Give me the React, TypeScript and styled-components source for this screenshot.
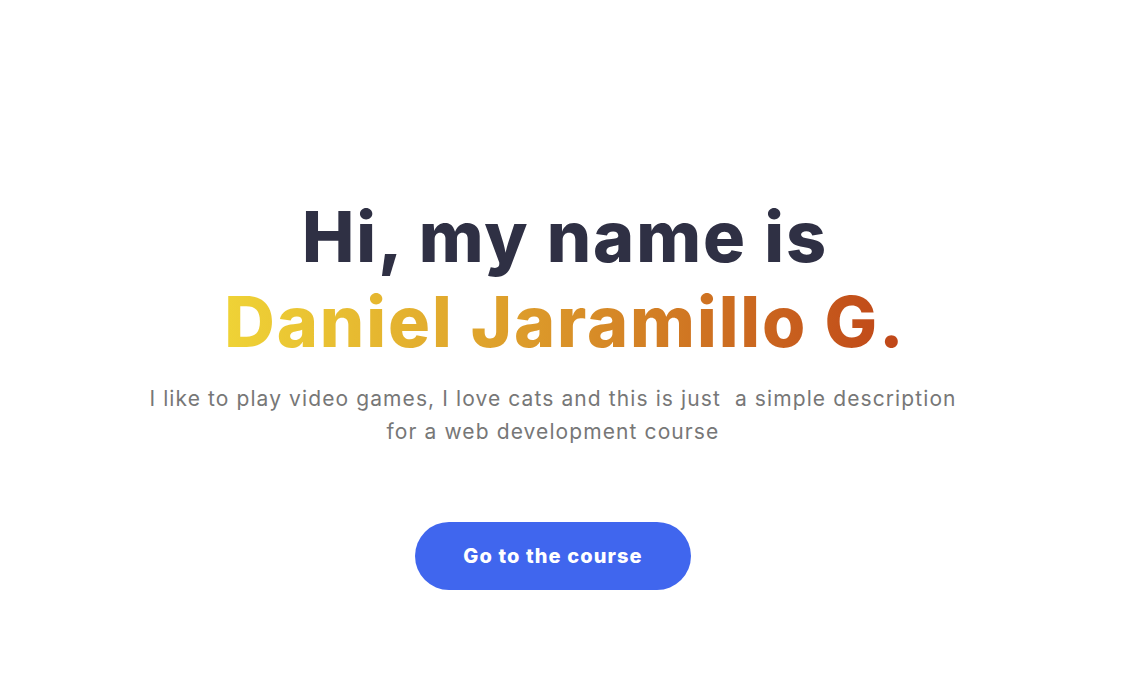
import React from "react";
import styled, { createGlobalStyle } from "styled-components";

const Global = createGlobalStyle`
  html, body { margin: 0; padding: 0; background: #ffffff; }
  body { font-family: "Inter", "Noto Sans", sans-serif; }
`;

const Page = styled.main`
  width: 1106px;
  height: 699px;
  display: flex;
  flex-direction: column;
  align-items: center;
  padding-top: 194px;
  box-sizing: border-box;
`;

const Title = styled.h1`
  margin: 0;
  padding-left: 24px;
  font-family: "Inter", sans-serif;
  font-weight: 800;
  font-size: 70px;
  line-height: 85px;
  letter-spacing: 1.9px;
  text-align: center;
  color: #2f3044;
`;

const Line = styled.span`
  display: block;
`;

const Name = styled.span`
  display: inline-block;
  background: linear-gradient(90deg, #efd336 0%, #dc9a2a 45%, #bf4518 100%);
  -webkit-background-clip: text;
  background-clip: text;
  color: transparent;
`;

const Description = styled.p`
  margin: 18px 0 0;
  max-width: 900px;
  font-family: "Inter", sans-serif;
  font-size: 21px;
  line-height: 33px;
  letter-spacing: 1.1px;
  color: #777777;
  text-align: center;
  white-space: pre-wrap;
`;

const Button = styled.button`
  margin-top: 74px;
  width: 276px;
  height: 68px;
  border: none;
  border-radius: 34px;
  background: #4066ee;
  color: #ffffff;
  font-family: "Inter", sans-serif;
  font-weight: 800;
  font-size: 20px;
  letter-spacing: 1.1px;
  cursor: pointer;
`;

export default function App() {
  return (
    <>
      <Global />
      <Page>
        <Title>
          <Line>Hi, my name is</Line>
          <Line>
            <Name>Daniel Jaramillo G.</Name>
          </Line>
        </Title>
        <Description>
          {"I like to play video games, I love cats and this is just  a simple description\nfor a web development course"}
        </Description>
        <Button>Go to the course</Button>
      </Page>
    </>
  );
}
